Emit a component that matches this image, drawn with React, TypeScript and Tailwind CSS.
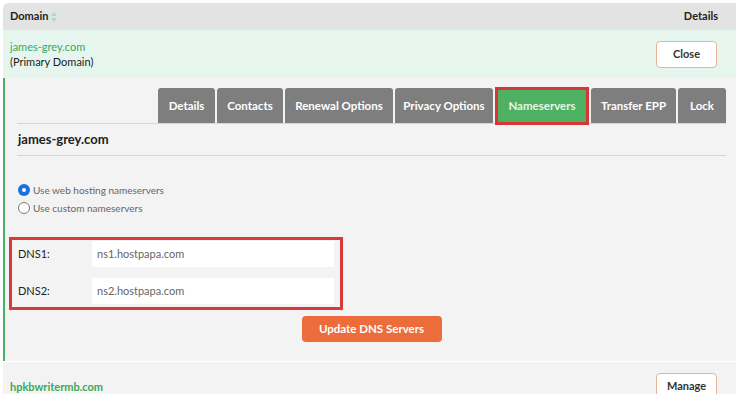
export default function App() {
  const tabs = [
    { label: "Details", w: "w-[57px]" },
    { label: "Contacts", w: "w-[66px]" },
    { label: "Renewal Options", w: "w-[108px]" },
    { label: "Privacy Options", w: "w-[98px]" },
    { label: "Nameservers", w: "w-[94px]", active: true },
    { label: "Transfer EPP", w: "w-[85px]" },
    { label: "Lock", w: "w-[48px]" },
  ];

  return (
    <div className="w-[742px] h-[394px] overflow-hidden bg-white font-['Lato','Open_Sans',sans-serif] text-[#333]">
      <div className="ml-[3px] mt-[3px] w-[733px] rounded-tl-md bg-[#f3f3f3]">
        {/* table header */}
        <div className="flex h-[27px] items-center justify-between rounded-tl-md bg-[#e3e3e3] pl-[7px] pr-[18px] text-[11px] font-bold text-[#222]">
          <div className="flex items-center gap-[3px]">
            <span>Domain</span>
            <svg width="6" height="10" viewBox="0 0 6 10">
              <path d="M3 0 L6 4 L0 4 Z" fill="#a8dcc0" />
              <path d="M3 10 L6 6 L0 6 Z" fill="#a8dcc0" />
            </svg>
          </div>
          <span>Details</span>
        </div>

        {/* primary domain row */}
        <div className="flex h-[48px] items-center justify-between bg-[#e6f5ee] pl-[7px] pr-[19px] text-[11px]">
          <div className="leading-[15px]">
            <div className="text-[#3aa95a]">james-grey.com</div>
            <div className="text-[#222]">(Primary Domain)</div>
          </div>
          <button className="h-[27px] w-[61px] rounded-[4px] border border-[#e6b496] bg-white text-[11px] font-bold text-[#333]">
            Close
          </button>
        </div>

        {/* expanded panel */}
        <div className="border-l-2 border-[#4caf68] pb-[19px] pl-[12px] pr-[10px] pt-[10px]">
          <div className="flex justify-end gap-[2px] border-b border-[#d6d6d6]">
            {tabs.map((t) =>
              t.active ? (
                <div
                  key={t.label}
                  className={`${t.w} -mt-[1px] -mb-[2px] flex h-[38px] items-center justify-center border-[3px] border-[#d83636] bg-[#4db063] text-[11.5px] font-bold text-[#e5f7e5]`}
                >
                  {t.label}
                </div>
              ) : (
                <div
                  key={t.label}
                  className={`${t.w} flex h-[35px] items-center justify-center rounded-t-[3px] bg-[#7e7e7e] text-[11.5px] font-bold text-white`}
                >
                  {t.label}
                </div>
              )
            )}
          </div>

          <div className="flex h-[32px] items-center border-b border-[#d6d6d6] pl-[1px] text-[13px] font-bold text-[#222]">
            james-grey.com
          </div>

          <div className="mt-[28px] flex flex-col gap-[6px] pl-[1px] text-[10px] leading-[12px] text-[#666]">
            <label className="flex items-center gap-[3px]">
              <span className="flex h-[12px] w-[12px] items-center justify-center rounded-full bg-[#1b6fe0]">
                <span className="h-[4px] w-[4px] rounded-full bg-white" />
              </span>
              Use web hosting nameservers
            </label>
            <label className="flex items-center gap-[3px]">
              <span className="h-[12px] w-[12px] rounded-full border border-[#777] bg-white" />
              Use custom nameservers
            </label>
          </div>

          <div className="-ml-[8px] mt-[23px] flex w-[334px] flex-col gap-[11px] border-[3px] border-[#d83a3a] pb-[3px] pl-[6px] pr-[6px] pt-[1px] text-[11px]">
            <div className="flex items-center">
              <span className="w-[74px] text-[#222]">DNS1:</span>
              <div className="flex h-[26px] flex-1 items-center bg-white pl-[5px] text-[#666]">ns1.hostpapa.com</div>
            </div>
            <div className="flex items-center">
              <span className="w-[74px] text-[#222]">DNS2:</span>
              <div className="flex h-[26px] flex-1 items-center bg-white pl-[5px] text-[#666]">ns2.hostpapa.com</div>
            </div>
          </div>

          <div className="mt-[6px] flex justify-center">
            <button className="h-[26px] w-[140px] rounded-[4px] bg-[#ec6c3b] text-[11.5px] font-bold text-white">
              Update DNS Servers
            </button>
          </div>
        </div>

        {/* next domain row */}
        <div className="flex h-[40px] items-start justify-between border-t border-white pl-[7px] pr-[19px] pt-[11px]">
          <div className="pt-[6px] text-[11px] font-bold text-[#3aa95a]">hpkbwritermb.com</div>
          <button className="h-[27px] w-[61px] rounded-[4px] border border-[#e6b496] bg-white text-[11px] font-bold text-[#333]">
            Manage
          </button>
        </div>
      </div>
    </div>
  );
}
